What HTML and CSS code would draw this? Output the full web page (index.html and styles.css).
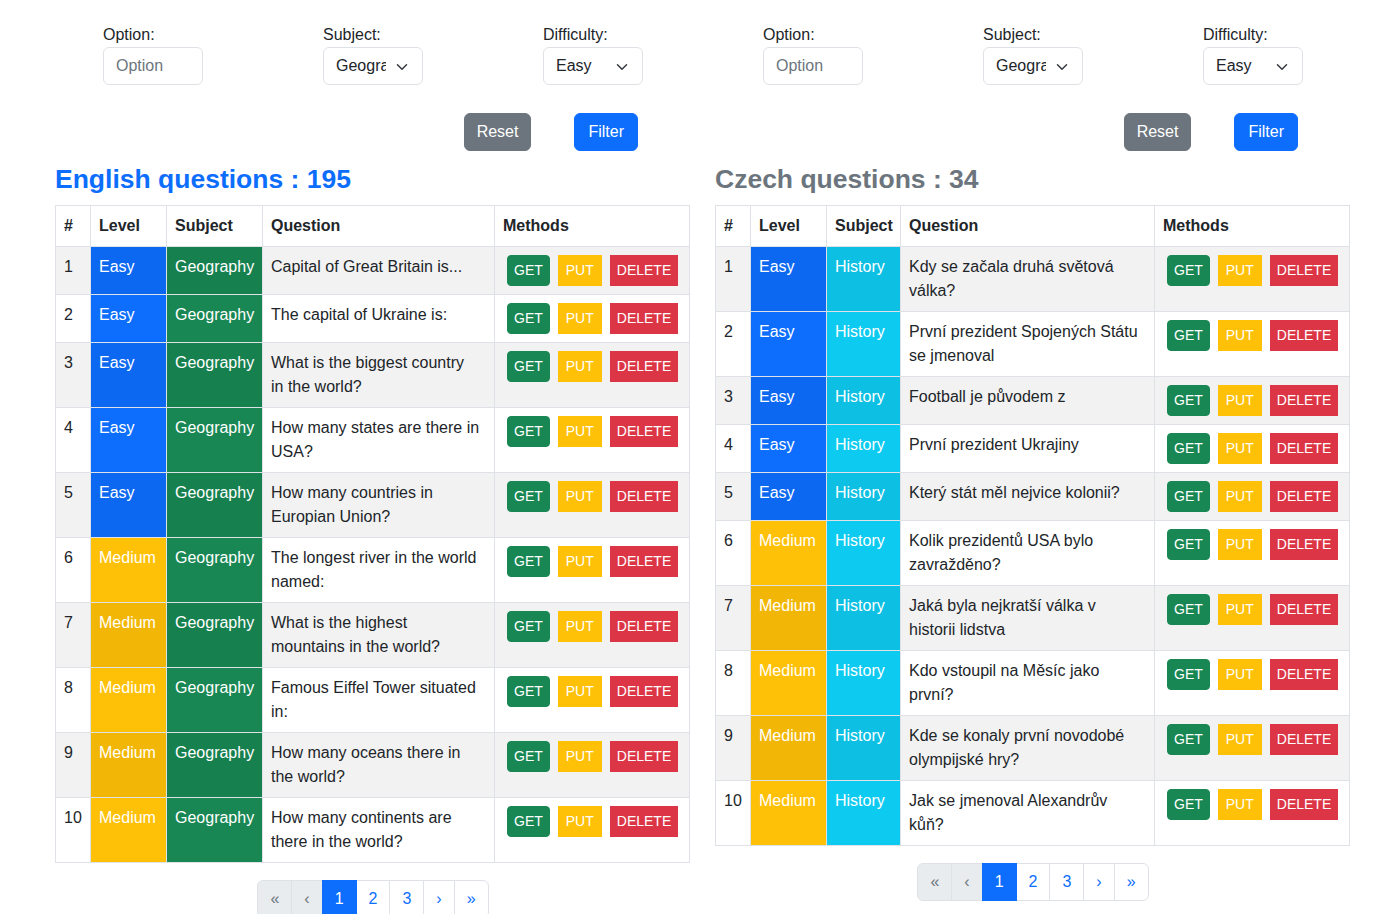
FILE: index.html
```html
<!DOCTYPE html>
<html lang="en">
<head>
<meta charset="utf-8">
<title>Questions</title>
<link rel="stylesheet" href="styles.css">
</head>
<body>
<div class="page">
  <section class="half">
    <form class="filters">
      <div class="field">
        <label class="field-label">Option:</label>
        <input class="control" type="text" placeholder="Option">
      </div>
      <div class="field">
        <label class="field-label">Subject:</label>
        <div class="control select"><span class="select-text">Geography</span><svg class="chev" width="12" height="8" viewBox="0 0 16 10"><path d="M2 2l6 6 6-6" fill="none" stroke="#343a40" stroke-width="2" stroke-linecap="round" stroke-linejoin="round"/></svg></div>
      </div>
      <div class="field">
        <label class="field-label">Difficulty:</label>
        <div class="control select"><span class="select-text">Easy</span><svg class="chev" width="12" height="8" viewBox="0 0 16 10"><path d="M2 2l6 6 6-6" fill="none" stroke="#343a40" stroke-width="2" stroke-linecap="round" stroke-linejoin="round"/></svg></div>
      </div>
    </form>
    <div class="actions">
      <button class="btn btn-secondary" type="button">Reset</button>
      <button class="btn btn-primary" type="button">Filter</button>
    </div>
    <div class="content">
      <h3 class="title title-en">English questions : 195</h3>
      <table class="qtable">
        <colgroup><col class="c-num"><col class="c-level"><col class="c-subj-en"><col class="c-q-en"><col></colgroup>
        <thead><tr><th>#</th><th>Level</th><th>Subject</th><th>Question</th><th>Methods</th></tr></thead>
        <tbody>
          <tr><td>1</td><td class="bg-easy">Easy</td><td class="bg-geo">Geography</td><td>Capital of Great Britain is...</td><td><div class="btns"><span class="mb get">GET</span><span class="mb put">PUT</span><span class="mb del">DELETE</span></div></td></tr>
          <tr><td>2</td><td class="bg-easy">Easy</td><td class="bg-geo">Geography</td><td>The capital of Ukraine is:</td><td><div class="btns"><span class="mb get">GET</span><span class="mb put">PUT</span><span class="mb del">DELETE</span></div></td></tr>
          <tr><td>3</td><td class="bg-easy">Easy</td><td class="bg-geo">Geography</td><td>What is the biggest country<br>in the world?</td><td><div class="btns"><span class="mb get">GET</span><span class="mb put">PUT</span><span class="mb del">DELETE</span></div></td></tr>
          <tr><td>4</td><td class="bg-easy">Easy</td><td class="bg-geo">Geography</td><td>How many states are there in<br>USA?</td><td><div class="btns"><span class="mb get">GET</span><span class="mb put">PUT</span><span class="mb del">DELETE</span></div></td></tr>
          <tr><td>5</td><td class="bg-easy">Easy</td><td class="bg-geo">Geography</td><td>How many countries in<br>Europian Union?</td><td><div class="btns"><span class="mb get">GET</span><span class="mb put">PUT</span><span class="mb del">DELETE</span></div></td></tr>
          <tr><td>6</td><td class="bg-medium">Medium</td><td class="bg-geo">Geography</td><td>The longest river in the world<br>named:</td><td><div class="btns"><span class="mb get">GET</span><span class="mb put">PUT</span><span class="mb del">DELETE</span></div></td></tr>
          <tr><td>7</td><td class="bg-medium">Medium</td><td class="bg-geo">Geography</td><td>What is the highest<br>mountains in the world?</td><td><div class="btns"><span class="mb get">GET</span><span class="mb put">PUT</span><span class="mb del">DELETE</span></div></td></tr>
          <tr><td>8</td><td class="bg-medium">Medium</td><td class="bg-geo">Geography</td><td>Famous Eiffel Tower situated<br>in:</td><td><div class="btns"><span class="mb get">GET</span><span class="mb put">PUT</span><span class="mb del">DELETE</span></div></td></tr>
          <tr><td>9</td><td class="bg-medium">Medium</td><td class="bg-geo">Geography</td><td>How many oceans there in<br>the world?</td><td><div class="btns"><span class="mb get">GET</span><span class="mb put">PUT</span><span class="mb del">DELETE</span></div></td></tr>
          <tr><td>10</td><td class="bg-medium">Medium</td><td class="bg-geo">Geography</td><td>How many continents are<br>there in the world?</td><td><div class="btns"><span class="mb get">GET</span><span class="mb put">PUT</span><span class="mb del">DELETE</span></div></td></tr>
        </tbody>
      </table>
      <nav class="pager">
        <ul class="pagination">
          <li class="page-item disabled"><span class="page-link">«</span></li>
          <li class="page-item disabled"><span class="page-link">‹</span></li>
          <li class="page-item active"><span class="page-link">1</span></li>
          <li class="page-item"><span class="page-link">2</span></li>
          <li class="page-item"><span class="page-link">3</span></li>
          <li class="page-item"><span class="page-link">›</span></li>
          <li class="page-item"><span class="page-link">»</span></li>
        </ul>
      </nav>
    </div>
  </section>

  <section class="half">
    <form class="filters">
      <div class="field">
        <label class="field-label">Option:</label>
        <input class="control" type="text" placeholder="Option">
      </div>
      <div class="field">
        <label class="field-label">Subject:</label>
        <div class="control select"><span class="select-text">Geography</span><svg class="chev" width="12" height="8" viewBox="0 0 16 10"><path d="M2 2l6 6 6-6" fill="none" stroke="#343a40" stroke-width="2" stroke-linecap="round" stroke-linejoin="round"/></svg></div>
      </div>
      <div class="field">
        <label class="field-label">Difficulty:</label>
        <div class="control select"><span class="select-text">Easy</span><svg class="chev" width="12" height="8" viewBox="0 0 16 10"><path d="M2 2l6 6 6-6" fill="none" stroke="#343a40" stroke-width="2" stroke-linecap="round" stroke-linejoin="round"/></svg></div>
      </div>
    </form>
    <div class="actions">
      <button class="btn btn-secondary" type="button">Reset</button>
      <button class="btn btn-primary" type="button">Filter</button>
    </div>
    <div class="content">
      <h3 class="title title-cz">Czech questions : 34</h3>
      <table class="qtable">
        <colgroup><col class="c-num"><col class="c-level"><col class="c-subj-cz"><col class="c-q-cz"><col></colgroup>
        <thead><tr><th>#</th><th>Level</th><th>Subject</th><th>Question</th><th>Methods</th></tr></thead>
        <tbody>
          <tr><td>1</td><td class="bg-easy">Easy</td><td class="bg-hist">History</td><td>Kdy se začala druhá světová<br>válka?</td><td><div class="btns"><span class="mb get">GET</span><span class="mb put">PUT</span><span class="mb del">DELETE</span></div></td></tr>
          <tr><td>2</td><td class="bg-easy">Easy</td><td class="bg-hist">History</td><td>První prezident Spojených Státu<br>se jmenoval</td><td><div class="btns"><span class="mb get">GET</span><span class="mb put">PUT</span><span class="mb del">DELETE</span></div></td></tr>
          <tr><td>3</td><td class="bg-easy">Easy</td><td class="bg-hist">History</td><td>Football je původem z</td><td><div class="btns"><span class="mb get">GET</span><span class="mb put">PUT</span><span class="mb del">DELETE</span></div></td></tr>
          <tr><td>4</td><td class="bg-easy">Easy</td><td class="bg-hist">History</td><td>První prezident Ukrajiny</td><td><div class="btns"><span class="mb get">GET</span><span class="mb put">PUT</span><span class="mb del">DELETE</span></div></td></tr>
          <tr><td>5</td><td class="bg-easy">Easy</td><td class="bg-hist">History</td><td>Který stát měl nejvice kolonii?</td><td><div class="btns"><span class="mb get">GET</span><span class="mb put">PUT</span><span class="mb del">DELETE</span></div></td></tr>
          <tr><td>6</td><td class="bg-medium">Medium</td><td class="bg-hist">History</td><td>Kolik prezidentů USA bylo<br>zavražděno?</td><td><div class="btns"><span class="mb get">GET</span><span class="mb put">PUT</span><span class="mb del">DELETE</span></div></td></tr>
          <tr><td>7</td><td class="bg-medium">Medium</td><td class="bg-hist">History</td><td>Jaká byla nejkratší válka v<br>historii lidstva</td><td><div class="btns"><span class="mb get">GET</span><span class="mb put">PUT</span><span class="mb del">DELETE</span></div></td></tr>
          <tr><td>8</td><td class="bg-medium">Medium</td><td class="bg-hist">History</td><td>Kdo vstoupil na Měsíc jako<br>první?</td><td><div class="btns"><span class="mb get">GET</span><span class="mb put">PUT</span><span class="mb del">DELETE</span></div></td></tr>
          <tr><td>9</td><td class="bg-medium">Medium</td><td class="bg-hist">History</td><td>Kde se konaly první novodobé<br>olympijské hry?</td><td><div class="btns"><span class="mb get">GET</span><span class="mb put">PUT</span><span class="mb del">DELETE</span></div></td></tr>
          <tr><td>10</td><td class="bg-medium">Medium</td><td class="bg-hist">History</td><td>Jak se jmenoval Alexandrův<br>kůň?</td><td><div class="btns"><span class="mb get">GET</span><span class="mb put">PUT</span><span class="mb del">DELETE</span></div></td></tr>
        </tbody>
      </table>
      <nav class="pager">
        <ul class="pagination">
          <li class="page-item disabled"><span class="page-link">«</span></li>
          <li class="page-item disabled"><span class="page-link">‹</span></li>
          <li class="page-item active"><span class="page-link">1</span></li>
          <li class="page-item"><span class="page-link">2</span></li>
          <li class="page-item"><span class="page-link">3</span></li>
          <li class="page-item"><span class="page-link">›</span></li>
          <li class="page-item"><span class="page-link">»</span></li>
        </ul>
      </nav>
    </div>
  </section>
</div>
</body>
</html>
```

FILE: styles.css
```css
* { box-sizing: border-box; }

body {
  margin: 0;
  font-family: "Liberation Sans", Arial, sans-serif;
  font-size: 16px;
  line-height: 1.5;
  color: #212529;
  background: #fff;
}

.page {
  display: flex;
  padding: 23px 0 0 43px;
}

.half {
  width: 660px;
  flex: none;
}

.filters {
  display: grid;
  grid-template-columns: repeat(3, 220px);
  justify-items: center;
  margin: 0;
}

.field {
  width: 100px;
}

.field-label {
  display: block;
  height: 24px;
  line-height: 24px;
}

.control {
  display: block;
  width: 100px;
  height: 38px;
  padding: 6px 12px;
  border: 1px solid #dee2e6;
  border-radius: 6px;
  background: #fff;
  font-family: inherit;
  font-size: 16px;
  line-height: 24px;
  color: #212529;
}

.control::placeholder {
  color: #6c757d;
  opacity: 1;
}

.select {
  position: relative;
  padding-right: 36px;
}

.select-text {
  display: block;
  overflow: hidden;
  white-space: nowrap;
}

.chev {
  position: absolute;
  right: 14px;
  top: 15px;
}

.actions {
  display: flex;
  justify-content: flex-end;
  gap: 43px;
  padding-right: 65px;
  margin-top: 28px;
}

.btn {
  font-family: inherit;
  font-size: 16px;
  line-height: 24px;
  height: 38px;
  padding: 6px 12px;
  border: 1px solid transparent;
  border-radius: 6px;
  color: #fff;
}

.btn-secondary { background: #6c757d; border-color: #6c757d; }
.btn-primary { background: #0d6efd; border-color: #0d6efd; padding: 6px 13px; }

.content {
  padding: 0 12px;
}

.title {
  margin: 12px 0 8px;
  font-size: 26.5px;
  font-weight: 700;
  line-height: 33.6px;
}

.title-en { color: #0d6efd; }
.title-cz { color: #6c757d; }

.qtable {
  width: 635px;
  table-layout: fixed;
  border-collapse: collapse;
}

.c-num { width: 35px; }
.c-level { width: 76px; }
.c-subj-en { width: 96px; }
.c-q-en { width: 232px; }
.c-subj-cz { width: 74px; }
.c-q-cz { width: 254px; }

.qtable th,
.qtable td {
  border: 1px solid #dee2e6;
  padding: 8px;
  text-align: left;
  vertical-align: top;
  line-height: 24px;
  white-space: nowrap;
}

.qtable th {
  font-weight: 700;
}

.qtable tbody tr:nth-child(odd) td {
  box-shadow: inset 0 0 0 9999px rgba(0, 0, 0, 0.05);
}

.bg-easy { background: #0d6efd; color: #fff; }
.bg-medium { background: #ffc107; color: #fff; }
.bg-geo { background: #198754; color: #fff; }
.bg-hist { background: #0dcaf0; color: #fff; }

.btns {
  display: flex;
  gap: 8px;
  margin-left: 4px;
}

.mb {
  display: inline-block;
  height: 31px;
  padding: 4px 6px;
  border: 1px solid transparent;
  font-size: 14px;
  line-height: 21px;
  color: #fff;
}

.get { background: #198754; border-color: #198754; border-radius: 4px; }
.put { background: #ffc107; border-color: #ffc107; padding: 4px 7px; }
.del { background: #dc3545; border-color: #dc3545; }

.pager {
  display: flex;
  justify-content: center;
  margin-top: 17px;
}

.pagination {
  display: flex;
  list-style: none;
  margin: 0;
  padding: 0;
}

.page-link {
  display: block;
  height: 38px;
  padding: 6px 12px;
  border: 1px solid #dee2e6;
  margin-left: -1px;
  line-height: 24px;
  color: #0d6efd;
  background: #fff;
}

.page-item:first-child .page-link {
  margin-left: 0;
  border-radius: 6px 0 0 6px;
}

.page-item:last-child .page-link {
  border-radius: 0 6px 6px 0;
}

.disabled .page-link {
  color: #6c757d;
  background: #e9ecef;
}

.active .page-link {
  color: #fff;
  background: #0d6efd;
  border-color: #0d6efd;
  position: relative;
}
```
